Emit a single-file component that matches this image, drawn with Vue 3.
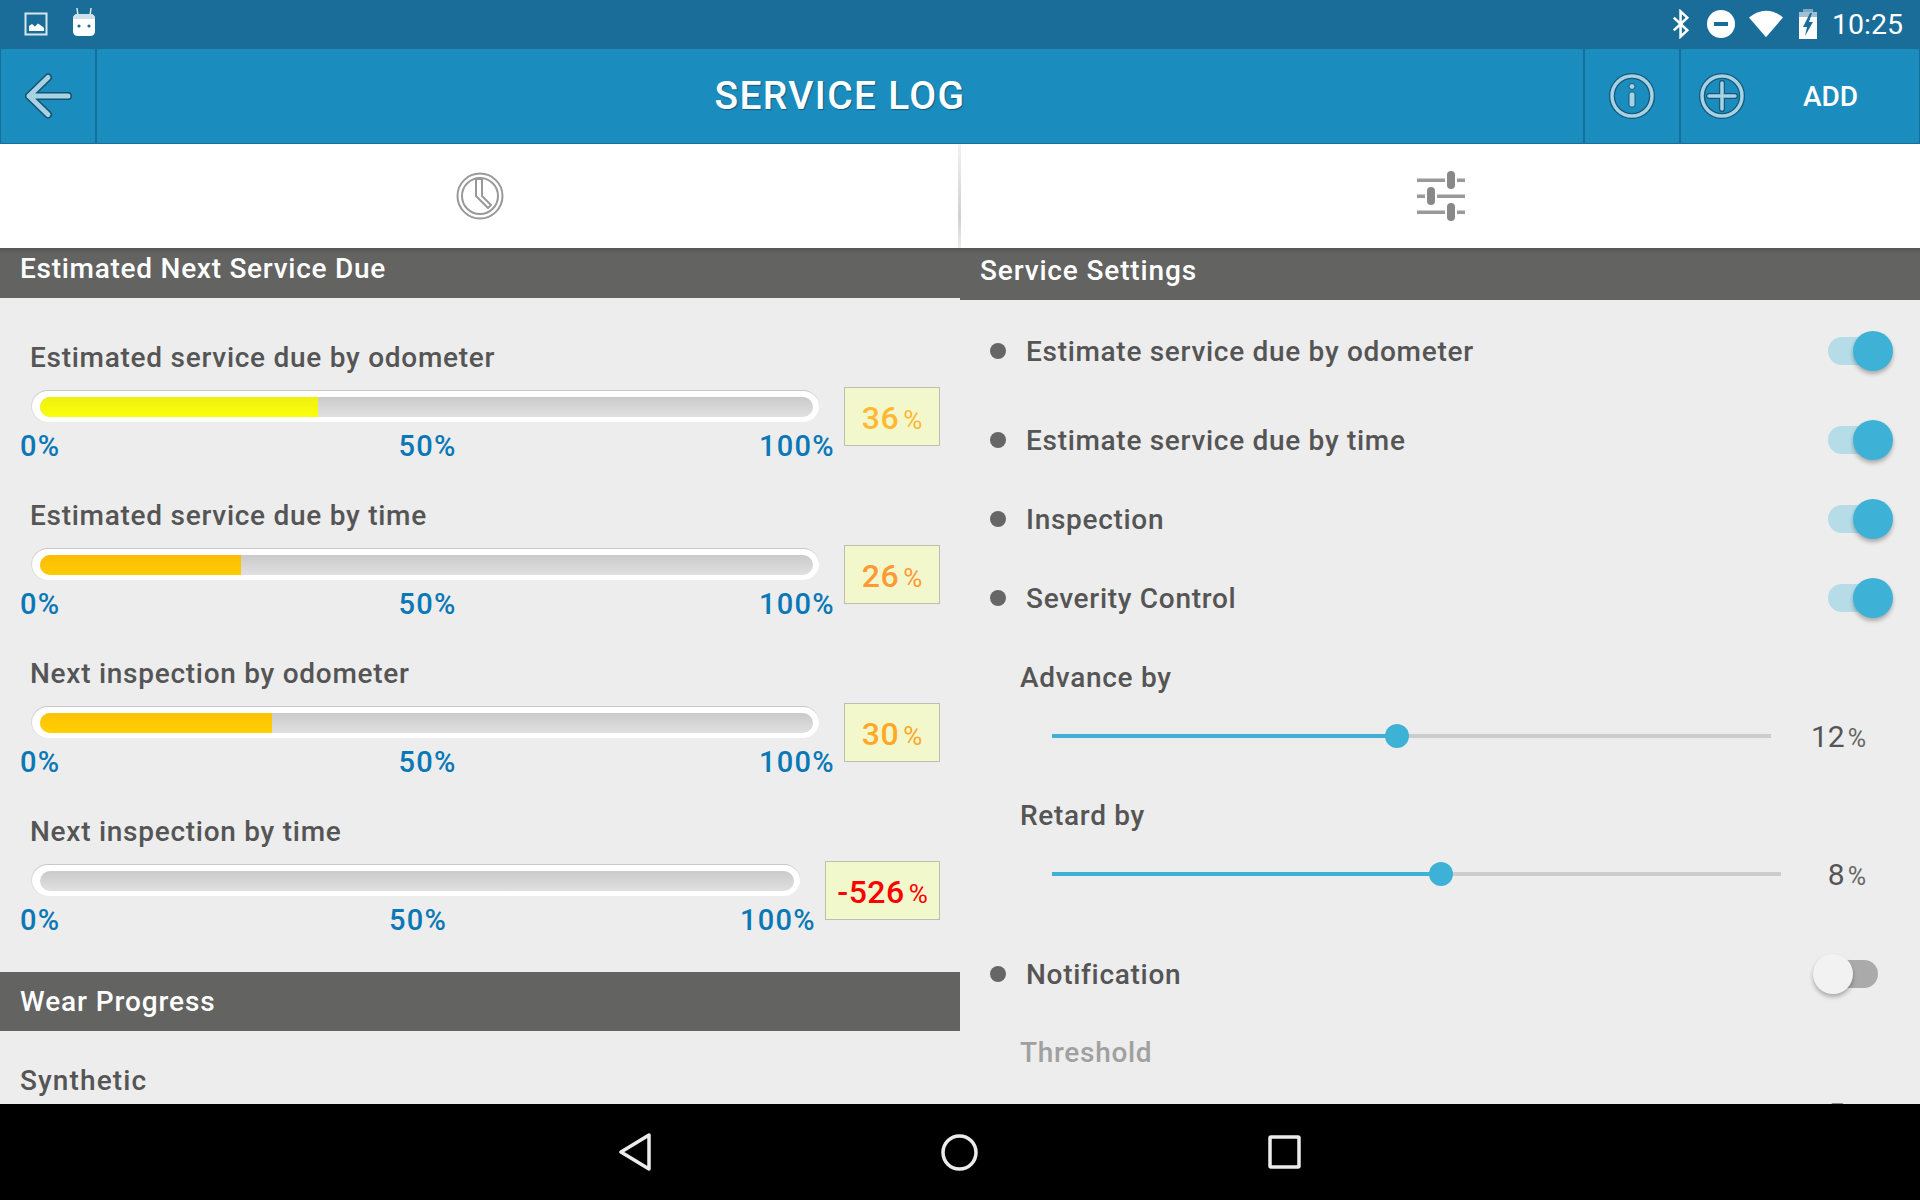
<script setup>
const bars = [
  { label: 'Estimated service due by odometer', fill: 36, color: 'linear-gradient(#eef00e,#fbff0a)', value: '36', tone: '#ffb833' },
  { label: 'Estimated service due by time', fill: 26, color: 'linear-gradient(#fbbd08,#ffcb00)', value: '26', tone: '#ff9933' },
  { label: 'Next inspection by odometer', fill: 30, color: 'linear-gradient(#fdc208,#ffd000)', value: '30', tone: '#ffa826' },
  { label: 'Next inspection by time', fill: 0, color: 'none', value: '-526', tone: '#ff0000', wide: true }
]
const settings = [
  { label: 'Estimate service due by odometer', gap: 'r1' },
  { label: 'Estimate service due by time', gap: 'r2' },
  { label: 'Inspection', gap: 'r3' },
  { label: 'Severity Control', gap: 'r3' }
]
</script>

<template>
  <div class="screen">
    <div class="status">
      <svg class="si" width="28" height="28" viewBox="0 0 28 28"><rect x="3.5" y="3.5" width="21" height="21" fill="none" stroke="#d9e6ee" stroke-width="2"/><path d="M7 21v-5l3-2 3 2.500 3-3 5 3.500 1 1v3z" fill="#fff"/></svg>
      <svg class="si robot" width="28" height="32" viewBox="0 0 28 32"><path d="M7 1l1 8M21 1l-1 8" stroke="#dbe8ef" stroke-width="1.500"/><path d="M3 12q0-5 5-5h12q5 0 5 5v12q0 5-5 5H8q-5 0-5-5z" fill="#fff"/><path d="M3 12q0-5 5-5h12q5 0 5 5z" fill="#cfe0ea"/><circle cx="9" cy="19" r="1.600" fill="#1a6d98"/><circle cx="19" cy="19" r="1.600" fill="#1a6d98"/></svg>
      <div class="grow"></div>
      <svg width="18" height="30" viewBox="0 0 20 30" class="bt"><path d="M2 8l15 14-7.500 7V1L17 8 2 22" fill="none" stroke="#fff" stroke-width="2.800"/></svg>
      <svg width="28" height="28" viewBox="0 0 28 28" class="dnd"><circle cx="14" cy="14" r="14" fill="#fff"/><rect x="7" y="12" width="14" height="4" fill="#1a6d98"/></svg>
      <svg width="34" height="28" viewBox="0 0 36 28" class="wifi"><path d="M0 7Q18-7 36 7L18 28z" fill="#fff"/></svg>
      <svg width="20" height="30" viewBox="0 0 20 30" class="batt"><path d="M5 0h10v3H5z" fill="#7fa9c1"/><path d="M1 3h18v6H1z" fill="#9fc0d2"/><path d="M1 8h18v22H1z" fill="#fff"/><path d="M12 4L5 18h4l-2 9 8-14h-4l3-9z" fill="#1a6d98"/></svg>
      <span class="clock">10:25</span>
    </div>

    <div class="appbar">
      <div class="cell back">
        <svg width="52" height="48" viewBox="0 0 52 48"><path d="M25 5.500L6 24l19 18.500M6 24h39" fill="none" stroke="#16506f" stroke-width="8" stroke-linecap="round" stroke-linejoin="round"/><path d="M25 5.500L6 24l19 18.500M6 24h39" fill="none" stroke="#a5d3e4" stroke-width="5" stroke-linecap="round" stroke-linejoin="round"/></svg>
      </div>
      <div class="title">SERVICE LOG</div>
      <div class="cell info">
        <svg width="46" height="46" viewBox="0 0 46 46"><circle cx="23" cy="23" r="20" fill="none" stroke="#17577a" stroke-width="6"/><circle cx="23" cy="23" r="20" fill="none" stroke="#a5d3e4" stroke-width="3.500"/><circle cx="23" cy="13.500" r="3" fill="#a5d3e4" stroke="#17577a" stroke-width="1"/><rect x="20" y="19" width="6" height="15" rx="2" fill="#a5d3e4" stroke="#17577a" stroke-width="1"/></svg>
      </div>
      <div class="cell add">
        <svg width="46" height="46" viewBox="0 0 46 46"><circle cx="23" cy="23" r="20" fill="none" stroke="#17577a" stroke-width="6"/><circle cx="23" cy="23" r="20" fill="none" stroke="#a5d3e4" stroke-width="3.500"/><path d="M23 10v26M10 23h26" stroke="#17577a" stroke-width="6" stroke-linecap="round"/><path d="M23 10v26M10 23h26" stroke="#a5d3e4" stroke-width="3.500" stroke-linecap="round"/></svg>
        <span class="addtxt">ADD</span>
      </div>
    </div>

    <div class="tabs">
      <div class="tab">
        <svg width="48" height="48" viewBox="0 0 48 48"><circle cx="24" cy="24" r="22.500" fill="none" stroke="#999" stroke-width="2"/><circle cx="24" cy="24" r="18" fill="none" stroke="#999" stroke-width="2"/><path d="M20 7h6v17l9 9-3 3-12-12z" fill="#fff" stroke="#999" stroke-width="2" stroke-linejoin="round"/></svg>
      </div>
      <div class="tab second">
        <svg width="48" height="50" viewBox="0 0 48 50"><g fill="#999"><rect y="7.500" width="28" height="3.500"/><rect x="40" y="7.500" width="8" height="3.500"/><rect y="23.500" width="8" height="3.500"/><rect x="20" y="23.500" width="28" height="3.500"/><rect y="39.500" width="28" height="3.500"/><rect x="40" y="39.500" width="8" height="3.500"/></g><g fill="#888"><rect x="30" y="0" width="8" height="18" rx="4"/><rect x="10" y="16" width="8" height="18" rx="4"/><rect x="30" y="32" width="8" height="18" rx="4"/></g></svg>
      </div>
    </div>

    <div class="content">
      <section class="left">
        <h2 class="head lefthead">Estimated Next Service Due</h2>
        <div class="bars">
          <div v-for="b in bars" :key="b.label" class="row">
            <div class="rowlabel">{{ b.label }}</div>
            <div class="rowbody">
              <div class="meter" :class="{ short: b.wide }">
                <div class="track">
                  <div class="inner">
                    <div class="fill" :style="{ width: b.fill + '%', background: b.color }"></div>
                  </div>
                </div>
                <div class="ticks"><span>0%</span><span>50%</span><span class="last">100%</span></div>
              </div>
              <div class="box" :class="{ boxwide: b.wide }" :style="{ color: b.tone }">
                <b>{{ b.value }}</b><i>%</i>
              </div>
            </div>
          </div>
        </div>
        <h2 class="head wear">Wear Progress</h2>
        <div class="synth">Synthetic</div>
      </section>

      <section class="right">
        <h2 class="head righthead">Service Settings</h2>
        <div v-for="s in settings" :key="s.label" class="set" :class="s.gap">
          <span class="dot"></span>
          <span class="settxt">{{ s.label }}</span>
          <span class="sw on"><span class="knob"></span></span>
        </div>

        <div class="sub advance">Advance by</div>
        <div class="slide s1">
          <div class="rail r12"><div class="done" style="width: 345px"></div><span class="thumb"></span></div>
          <div class="val"><b>12</b><i>%</i></div>
        </div>
        <div class="sub retard">Retard by</div>
        <div class="slide s2">
          <div class="rail r8"><div class="done" style="width: 389px"></div><span class="thumb"></span></div>
          <div class="val"><b>8</b><i>%</i></div>
        </div>

        <div class="set notif">
          <span class="dot"></span>
          <span class="settxt">Notification</span>
          <span class="sw off"><span class="knob"></span></span>
        </div>
        <div class="sub thresh">Threshold</div>
        <div class="slide s3">
          <div class="rail r5"><span class="thumb small"></span></div>
          <div class="val dim"><b>5</b><i>%</i></div>
        </div>
      </section>
    </div>

    <div class="nav">
      <svg width="32" height="38" viewBox="0 0 32 38"><path d="M30 2v34L2 19z" fill="none" stroke="#ececec" stroke-width="3.500" stroke-linejoin="round"/></svg>
      <svg width="37" height="37" viewBox="0 0 37 37"><circle cx="18.500" cy="18.500" r="16.500" fill="none" stroke="#ececec" stroke-width="3.500"/></svg>
      <svg width="33" height="34" viewBox="0 0 33 34"><rect x="2" y="2" width="29" height="30" rx="1" fill="none" stroke="#ececec" stroke-width="3.500"/></svg>
    </div>
  </div>
</template>

<style>
html, body { margin: 0; background: #ededed; }
</style>

<style scoped>
.screen { width: 1920px; height: 1200px; display: flex; flex-direction: column; overflow: hidden; background: #ededed; font-family: "Roboto", "Liberation Sans", sans-serif; color: #555; }
.status { height: 49px; flex: none; background: #1a6d98; display: flex; align-items: center; padding: 0 17px 1px 22px; color: #fff; box-sizing: border-box; }
.grow { flex: 1; }
.robot { margin-left: 20px; margin-top: -2px; }
.bt { margin-right: 17px; }
.dnd { margin-right: 14px; }
.wifi { margin-right: 15px; }
.batt { margin-right: 14px; }
.clock { font-size: 28.500px; font-family: "Roboto", sans-serif; }
.appbar { height: 95px; flex: none; background: #1a8cbe; display: flex; align-items: stretch; border-bottom: 1px solid #17709c; box-sizing: border-box; }
.cell { display: flex; align-items: center; box-sizing: border-box; }
.back { width: 97px; border-left: 1px solid #17709c; border-right: 2px solid #17709c; padding-left: 22px; }
.title { flex: 1; text-align: center; color: #fff; font-size: 39px; font-weight: 500; letter-spacing: 1.300px; line-height: 94px; text-shadow: 1px 1px 1px rgba(10, 60, 90, .6); }
.info { width: 96px; border-left: 2px solid #17709c; justify-content: center; }
.add { width: 241px; border-left: 2px solid #17709c; border-right: 1px solid #17709c; padding-left: 18px; }
.addtxt { color: #fff; font-size: 28px; font-weight: 500; margin-left: 58px; }
.tabs { height: 104px; flex: none; background: #fff; display: flex; }
.tab { flex: 1; display: flex; align-items: center; justify-content: center; box-sizing: border-box; }
.second { margin-left: -1px; border-left: 3px solid #eee; border-image: linear-gradient(#f2f2f2, #d0d0d0 70%, #eee) 1; }
.content { flex: 1; min-height: 0; display: flex; overflow: hidden; }
.left, .right { width: 960px; flex: none; overflow: hidden; }
.head { margin: 0; background: #636362; color: #fff; font-size: 28px; font-weight: 500; padding-left: 20px; box-sizing: border-box; }
.lefthead { height: 50px; line-height: 42px; letter-spacing: .73px; background: linear-gradient(#555 0, #636362 6px); }
.righthead { height: 52px; line-height: 46px; letter-spacing: .85px; background: linear-gradient(#555 0, #636362 6px); }
.bars { padding: 40px 0 0 0; }
.row { height: 158px; box-sizing: border-box; }
.rowlabel { font-size: 28px; font-weight: 500; line-height: 40px; padding-left: 30px; letter-spacing: .73px; height: 49px; }
.rowbody { display: flex; justify-content: space-between; padding-right: 20px; }
.meter { width: 819px; padding-left: 20px; box-sizing: border-box; margin-top: 3px; }
.meter.short { width: 800px; }
.track { margin-left: 12px; height: 32px; background: #fff; border-radius: 16px; border-top: 1px solid #c8c8c8; box-sizing: border-box; padding: 6px 6px 6px 8px; box-shadow: -1px 0 0 #dcdcdc; }
.inner { height: 20px; border-radius: 10px; overflow: hidden; background: linear-gradient(#cacaca, #e0e0e0); }
.fill { height: 100%; }
.ticks { display: grid; grid-template-columns: 1fr auto 1fr; margin: 6px -16px 0 0; font-size: 29px; line-height: 36px; font-weight: 500; color: #0a78b6; letter-spacing: 1.300px; }
.last { justify-self: end; }
.box { width: 96px; height: 59px; border: 1px solid #bcbfb0; background: #f2f8cb; box-sizing: border-box; display: flex; align-items: center; justify-content: center; padding-top: 2px; }
.boxwide { width: 115px; background: #f0f8cc; }
.box b { font-size: 32px; font-weight: 500; letter-spacing: .5px; }
.box i { font-style: normal; font-size: 26px; margin-left: 4px; padding-top: 4px; }
.wear { height: 59px; line-height: 60px; margin-top: 2px; letter-spacing: .9px; }
.synth { font-size: 28px; font-weight: 500; line-height: 40px; padding: 30px 0 0 20px; letter-spacing: 1.100px; }
.set { display: flex; align-items: center; height: 40px; padding-left: 30px; box-sizing: border-box; position: relative; }
.r1 { margin-top: 31px; }
.r2 { margin-top: 49px; }
.r3 { margin-top: 39px; }
.dot { width: 16px; height: 16px; border-radius: 50%; background: #666; flex: none; }
.settxt { margin-left: 20px; font-size: 28px; font-weight: 500; letter-spacing: .7px; flex: 1; }
.sw { position: relative; width: 52px; height: 28px; border-radius: 14px; margin-right: 40px; flex: none; }
.sw.on { background: #b6dce8; }
.sw.off { background: #aaa; width: 50px; margin-right: 42px; }
.knob { position: absolute; top: -6px; width: 40px; height: 40px; border-radius: 50%; box-shadow: 0 3px 4px rgba(0, 0, 0, .28); }
.on .knob { right: -13px; background: #3eb2d6; }
.off .knob { left: -15px; background: #f2f2f2; }
.sub { padding-left: 60px; font-size: 28px; font-weight: 500; line-height: 40px; letter-spacing: .7px; }
.advance { margin-top: 40px; }
.retard { margin-top: 40px; }
.thresh { margin-top: 39px; color: #a0a0a0; }
.slide { display: flex; align-items: center; height: 40px; padding-left: 92px; padding-right: 54px; box-sizing: border-box; position: relative; }
.s1 { margin-top: 18px; }
.s2 { margin-top: 18px; }
.s3 { margin-top: 20px; }
.rail { height: 4px; background: #ccc; position: relative; }
.r12 { width: 719px; }
.r8 { width: 729px; }
.r5 { width: 719px; }
.done { height: 100%; background: #3eb2d6; }
.thumb { position: absolute; top: -10px; width: 24px; height: 24px; border-radius: 50%; background: #3eb2d6; }
.r12 .thumb { left: 333px; }
.r8 .thumb { left: 377px; }
.thumb.small { left: 63px; top: -6px; width: 16px; height: 16px; background: #aaa; }
.val { margin-left: auto; color: #555; display: flex; align-items: baseline; font-size: 30px; }
.val b { font-weight: 400; }
.val i { font-style: normal; font-size: 25px; margin-left: 3px; color: #666; }
.dim { color: #888; }
.notif { margin-top: 60px; }
.nav { height: 96px; flex: none; background: #000; display: flex; align-items: center; justify-content: center; gap: 290px; }
</style>
